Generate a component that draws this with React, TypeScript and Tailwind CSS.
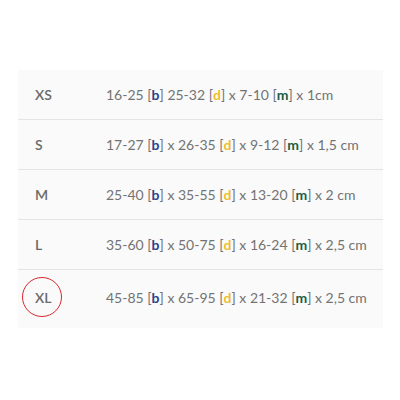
import React from 'react';

type Row = { size: string; parts: (string | { t: 'b' | 'd' | 'm' })[] };

const B = { t: 'b' as const };
const D = { t: 'd' as const };
const M = { t: 'm' as const };

const rows: Row[] = [
  { size: 'XS', parts: ['16-25 [', B, '] 25-32 [', D, '] x 7-10 [', M, '] x 1cm'] },
  { size: 'S', parts: ['17-27 [', B, '] x 26-35 [', D, '] x 9-12 [', M, '] x 1,5 cm'] },
  { size: 'M', parts: ['25-40 [', B, '] x 35-55 [', D, '] x 13-20 [', M, '] x 2 cm'] },
  { size: 'L', parts: ['35-60 [', B, '] x 50-75 [', D, '] x 16-24 [', M, '] x 2,5 cm'] },
  { size: 'XL', parts: ['45-85 [', B, '] x 65-95 [', D, '] x 21-32 [', M, '] x 2,5 cm'] },
];

const Letter: React.FC<{ t: 'b' | 'd' | 'm' }> = ({ t }) => {
  if (t === 'b') return <span className="font-bold text-[#2c3f8f]">b</span>;
  if (t === 'd') return <span className="font-bold text-[#f0bd2c]">d</span>;
  return <span className="font-bold text-[#1d5e45]">m</span>;
};

export default function App() {
  return (
    <div className="w-[400px] h-[400px] bg-white pt-[70px] pl-[18px]" style={{ fontFamily: 'Lato, "Noto Sans", sans-serif' }}>
      <div className="w-[365px] bg-[#fafafa]">
        {rows.map((r, i) => (
          <div
            key={r.size}
            className={`flex items-center text-[14px] ${i < rows.length - 1 ? 'h-[50px] border-b border-[#e4e4e4]' : 'h-[58px] pb-[4px]'}`}
          >
            <div className="w-[88px] pl-[17px] relative font-semibold text-[#6a6a6a]">
              {r.size}
              {r.size === 'XL' && (
                <span className="absolute left-[4px] top-1/2 -translate-y-1/2 w-[40px] h-[40px] rounded-full border-[1.5px] border-[#d9262c]" />
              )}
            </div>
            <div className="text-[#737373]">
              {r.parts.map((p, j) => (typeof p === 'string' ? <span key={j}>{p}</span> : <Letter key={j} t={p.t} />))}
            </div>
          </div>
        ))}
      </div>
    </div>
  );
}
